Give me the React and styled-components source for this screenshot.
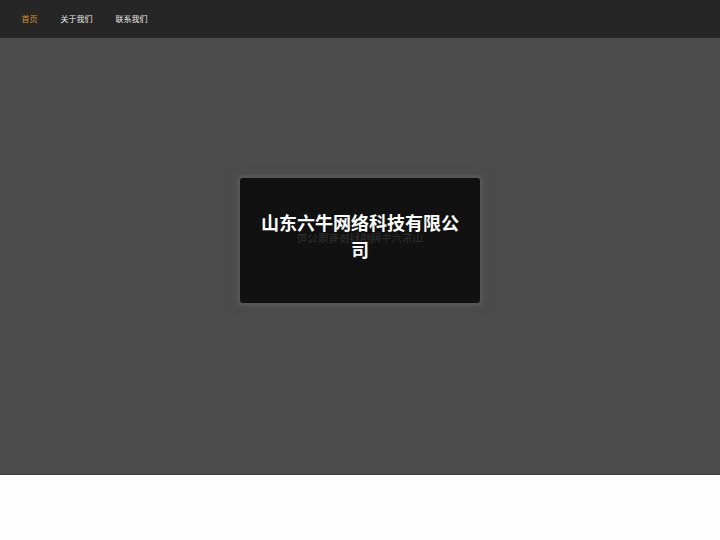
import React from 'react';
import styled, { createGlobalStyle } from 'styled-components';

const GlobalStyle = createGlobalStyle`
  html, body {
    margin: 0;
    padding: 0;
    background: #fefefe;
    font-family: "Noto Sans CJK SC", "Noto Sans", sans-serif;
  }
`;

const navItems = ['首页', '关于我们', '联系我们'];
const title = '山东六牛网络科技有限公司';

const App = () => {
  return (
    <>
      <GlobalStyle />
      <Header>
        <Nav>
          {navItems.map((item, i) => (
            <NavItem key={item} active={i === 0}>
              {item}
            </NavItem>
          ))}
        </Nav>
      </Header>
      <Hero>
        <Card>
          <Reflection>{title}</Reflection>
          <Title>{title}</Title>
        </Card>
      </Hero>
    </>
  );
};

export default App;

const Header = styled.div`
  height: 38px;
  background: #262626;
  display: flex;
  align-items: center;
`;

const Nav = styled.div`
  display: flex;
  padding-left: 10px;
`;

const NavItem = styled.a`
  font-size: 8px;
  line-height: 12px;
  padding: 0 11.5px;
  margin-top: -1px;
  color: ${p => (p.active ? '#d8962c' : '#e6e6e6')};
  cursor: pointer;
`;

const Hero = styled.div`
  height: 437px;
  background: #4b4b4b;
  display: flex;
  justify-content: center;
  align-items: flex-start;
  padding-top: 140px;
  border-bottom: 1px solid #3e3e3e;
  box-sizing: border-box;
`;

const Card = styled.div`
  position: relative;
  width: 240px;
  height: 125px;
  background: #111111;
  border-radius: 3px;
  box-shadow: 0 0 0 3px #555555, 0 0 6px 5px #505050;
  box-sizing: border-box;
  padding: 31px 20px 0;
  text-align: center;
`;

const Title = styled.h1`
  position: relative;
  margin: 0;
  font-size: 18px;
  line-height: 27px;
  font-weight: 700;
  color: #ffffff;
`;

const Reflection = styled.div`
  position: absolute;
  left: 0;
  right: 0;
  top: 53px;
  font-size: 10.5px;
  line-height: 14px;
  color: #303030;
  transform: scaleX(-1);
`;
